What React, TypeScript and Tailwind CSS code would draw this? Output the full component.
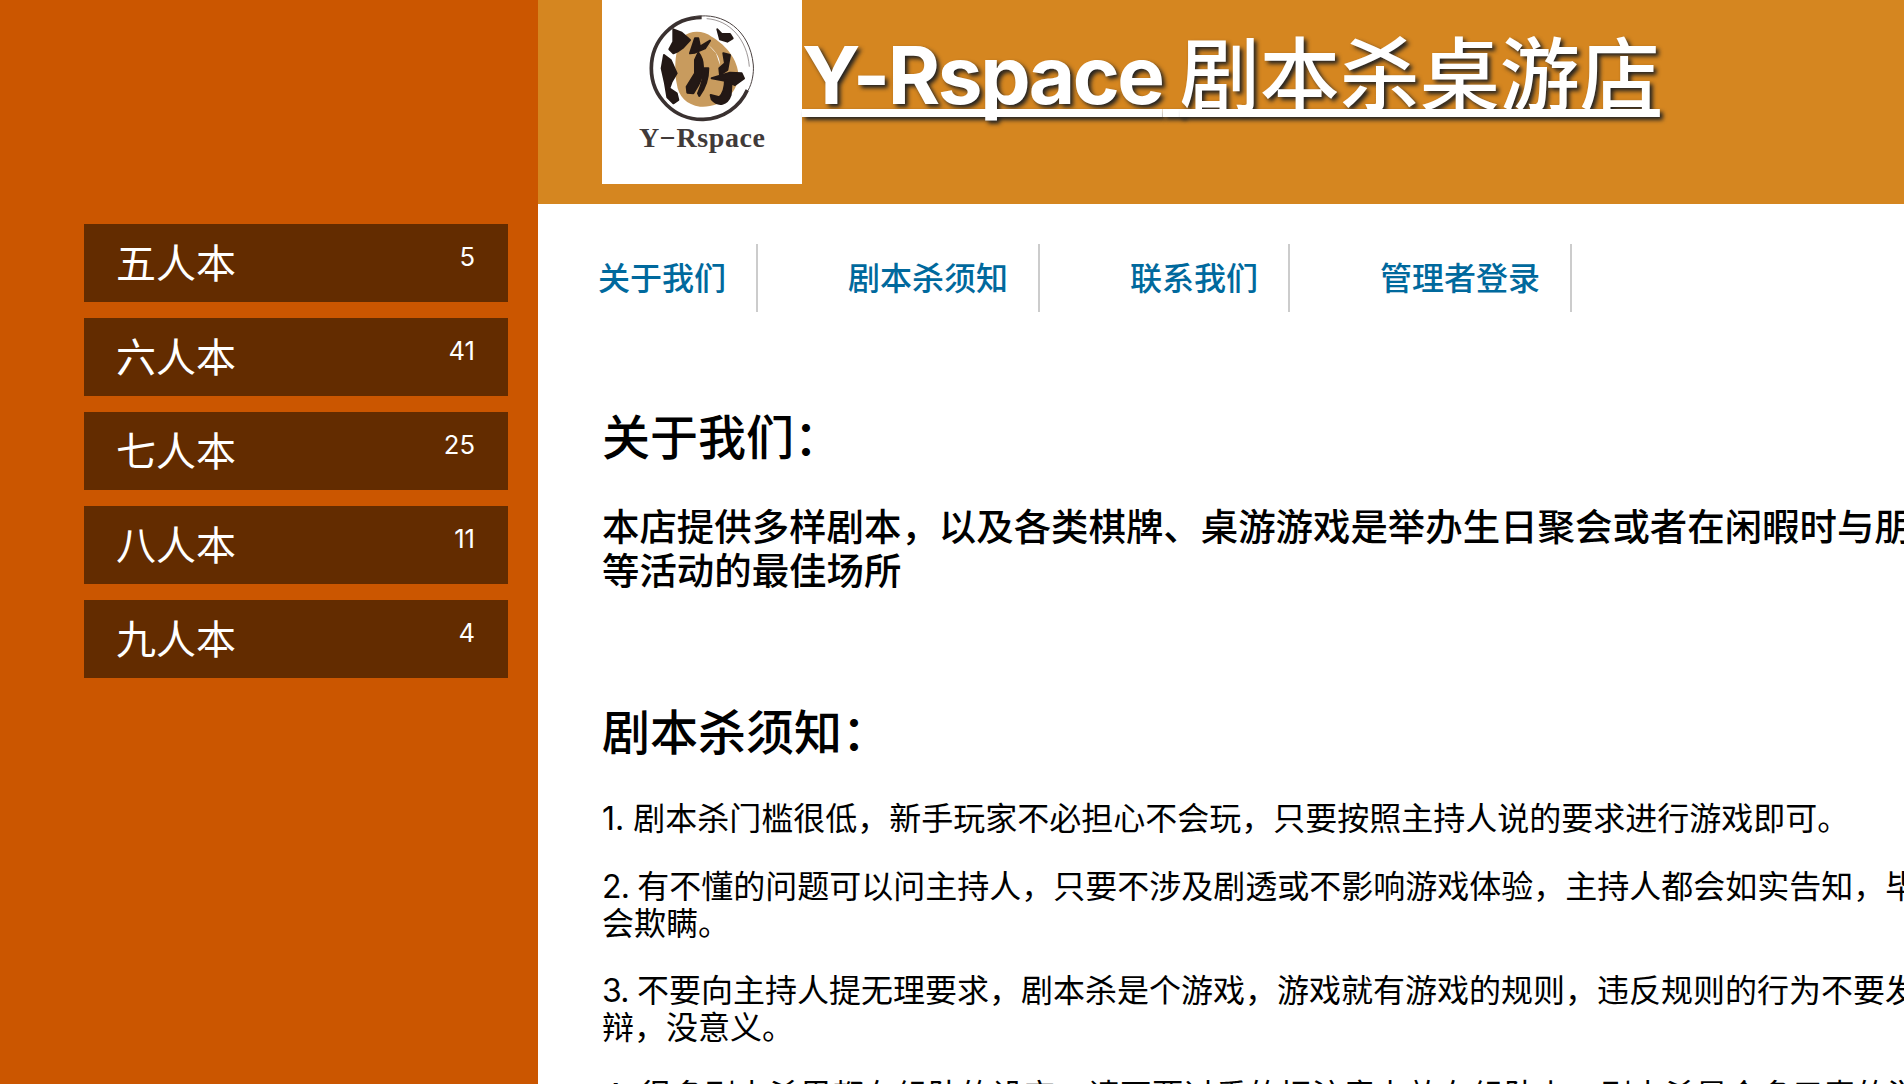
const FONT = "font-['Inter','Noto_Sans_CJK_SC',sans-serif]";

const items = [
  { name: "五人本", count: 5 },
  { name: "六人本", count: 41 },
  { name: "七人本", count: 25 },
  { name: "八人本", count: 11 },
  { name: "九人本", count: 4 },
];

const links = [
  { label: "关于我们", first: true },
  { label: "剧本杀须知" },
  { label: "联系我们" },
  { label: "管理者登录" },
];

function Logo() {
  return (
    <svg width="200" height="184" viewBox="0 0 200 184" className="block shrink-0 bg-white">
      <g transform="translate(38 10) scale(0.3333)">
        <path d="M130 80 C150 60 190 60 215 80 C250 100 290 140 295 190 C298 250 240 295 180 290 C140 285 115 260 110 220 C100 160 110 100 130 80Z" fill="#c89b5e" />
        <path d="M185 22 C100 22 34 90 34 175 C34 262 105 330 190 328 C250 326 300 290 322 240" fill="none" stroke="#3a3130" strokeWidth="11" />
        <path d="M165 20 C250 5 330 60 340 165 C342 190 336 220 325 240" fill="none" stroke="#4a4140" strokeWidth="3" />
        <path d="M200 26 C270 30 322 90 328 170" fill="none" stroke="#6a6160" strokeWidth="2" />
        <g fill="#231815" stroke="#231815" strokeWidth="6" strokeLinejoin="round">
          <path d="M100 58 L125 68 L150 90 L130 112 L112 125 L100 130 L88 118 L100 95Z" />
          <path d="M72 135 L92 150 L110 190 L95 215 L88 235 L110 250 L115 270 L100 280 L82 262 L75 220 L65 175Z" />
          <path d="M165 85 L175 85 L180 110 L210 92 L195 115 L165 128 L150 130Z" />
          <path d="M175 128 C192 150 195 185 175 225 L160 250 L142 248 L140 230 L165 190 L165 150Z" />
          <path d="M205 175 C205 210 195 235 178 258 L174 250 C185 225 192 200 190 175Z" />
          <path d="M232 58 L245 72 L270 72 L278 85 L262 95 L240 88Z" />
          <path d="M250 130 L270 135 L262 180 L240 195 L238 175 L255 160Z" />
          <path d="M215 205 L270 188 L305 190 L312 205 L285 225 L255 212Z" />
          <path d="M255 210 L275 215 L272 255 C262 285 235 290 215 268 L212 255 L238 262 C250 250 255 230 255 210Z" />
        </g>
        <path d="M205 105 C230 125 240 145 240 165 L228 130Z" fill="#ffffff" />
      </g>
      <text x="37" y="147" textLength="126" lengthAdjust="spacing" fontFamily="'Liberation Serif', serif" fontWeight="700" fontSize="28" fill="#413a39">Y−Rspace</text>
    </svg>
  );
}

export default function App() {
  return (
    <div className={`flex h-screen w-full overflow-hidden bg-white ${FONT}`}>
      <aside className="flex w-[538px] shrink-0 flex-col gap-4 bg-[#cb5600] pl-[84px] pr-[30px] pt-[224px]">
        {items.map((item) => (
          <a
            key={item.name}
            className="flex h-[78px] items-center justify-between bg-[#632c00] pl-8 pr-[33px] pt-[2px] text-[40px] text-white"
          >
            <span>{item.name}</span>
            <span className="-translate-y-[7px] text-[25.6px]">{item.count}</span>
          </a>
        ))}
      </aside>

      <main className="min-w-0 flex-1 overflow-hidden">
        <header className="flex h-[204px] items-start bg-[#d58620] pl-16">
          <Logo />
          <h1 className="whitespace-nowrap pt-[29px] text-[80px] font-medium leading-[92px] text-white underline decoration-[8px] underline-offset-[5px] [text-decoration-skip-ink:none] [text-shadow:3px_3px_4px_#222]">
            <span className="font-bold tracking-[-2.5px]">Y-Rspace</span>{" "}
            <span className="ml-[-4px]">剧本杀桌游店</span>
          </h1>
        </header>

        <nav className="mt-10 flex items-stretch pl-[60px]">
          {links.map((link) => (
            <a
              key={link.label}
              className={`flex h-[68px] items-center border-r-2 border-[#cccccc] pr-[30px] pt-[2px] text-[32px] font-medium text-[#00699d] ${link.first ? "" : "pl-[90px]"}`}
            >
              {link.label}
            </a>
          ))}
        </nav>

        <div className="whitespace-nowrap pl-16 text-black">
          <h2 className="mt-[98px] text-[48px] font-medium leading-[56px]">关于我们：</h2>
          <h3 className="mt-10 text-[37.44px] font-medium leading-[44px]">
            本店提供多样剧本，以及各类棋牌、桌游游戏是举办生日聚会或者在闲暇时与朋友
            <br />
            等活动的最佳场所
          </h3>
          <h2 className="mt-[111px] text-[48px] font-medium leading-[56px]">剧本杀须知：</h2>
          <div className="text-[32px] leading-[37px]">
            <p className="mt-[39px]">1. 剧本杀门槛很低，新手玩家不必担心不会玩，只要按照主持人说的要求进行游戏即可。</p>
            <p className="mt-[31px]">
              <span className="tracking-[-0.8px]">2. </span>有不懂的问题可以问主持人，只要不涉及剧透或不影响游戏体验，主持人都会如实告知，毕竟
              <br />
              会欺瞒。
            </p>
            <p className="mt-[30px]">
              <span className="tracking-[-0.8px]">3. </span>不要向主持人提无理要求，剧本杀是个游戏，游戏就有游戏的规则，违反规则的行为不要发生
              <br />
              辩，没意义。
            </p>
            <p className="mt-[31px]">4. 很多剧本杀里都有组队的设定，请不要过重的把注意力放在组队上，剧本杀是含多元素的游戏</p>
          </div>
        </div>
      </main>
    </div>
  );
}
